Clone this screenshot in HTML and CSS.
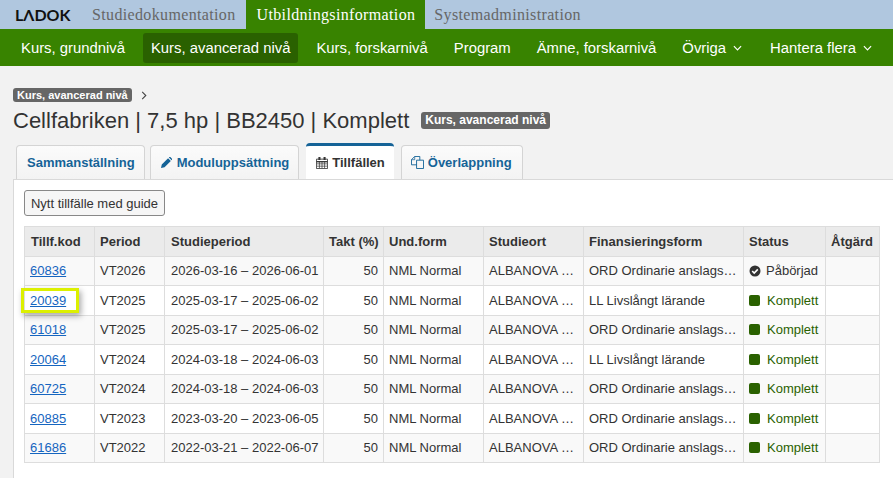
FILE: index.html
```html
<!DOCTYPE html>
<html lang="sv">
<head>
<meta charset="utf-8">
<title>Ladok</title>
<link rel="stylesheet" href="styles.css">
</head>
<body>
<header class="topbar">
  <div class="logo">LΛDOK</div>
  <a class="top-tab">Studiedokumentation</a>
  <a class="top-tab active">Utbildningsinformation</a>
  <a class="top-tab">Systemadministration</a>
</header>
<nav class="mainnav">
  <a class="nav-item">Kurs, grundnivå</a>
  <a class="nav-item active">Kurs, avancerad nivå</a>
  <a class="nav-item">Kurs, forskarnivå</a>
  <a class="nav-item">Program</a>
  <a class="nav-item">Ämne, forskarnivå</a>
  <a class="nav-item">Övriga <svg class="chev" viewBox="0 0 10 6"><path d="M1 1l4 4 4-4" fill="none" stroke="currentColor" stroke-width="1.3"/></svg></a>
  <a class="nav-item">Hantera flera <svg class="chev" viewBox="0 0 10 6"><path d="M1 1l4 4 4-4" fill="none" stroke="currentColor" stroke-width="1.3"/></svg></a>
</nav>
<main class="content">
  <div class="crumbs"><span class="badge">Kurs, avancerad nivå</span><svg class="crumb-sep" viewBox="0 0 6 10"><path d="M1 1l4 4-4 4" fill="none" stroke="#444" stroke-width="1.2"/></svg></div>
  <div class="title-row"><h1>Cellfabriken | 7,5 hp | BB2450 | Komplett</h1><span class="badge big">Kurs, avancerad nivå</span></div>
  <div class="tabs">
    <a class="tab">Sammanställning</a>
    <a class="tab modul"><svg class="ico pencil" viewBox="0 0 14 14"><path d="M0 14l1-4.500 8-8 3.500 3.500-8 8zM10 .5l.5-.5a1 1 0 0 1 1.400 0l2.100 2.100a1 1 0 0 1 0 1.400l-.5.500z" fill="currentColor"/></svg>Moduluppsättning</a>
    <a class="tab active"><svg class="ico cal" viewBox="0 0 14 14"><path d="M.5 2.500h13v11H.5z" fill="none" stroke="currentColor"/><path d="M.5 5.500h13" stroke="currentColor" stroke-width="1.600"/><path d="M1 8h12M1 10.700h12M4 5v8M7 5v8M10 5v8" stroke="currentColor" stroke-width=".8"/><path d="M2.800 0h2.400v3.500H2.800zM8.800 0h2.400v3.500H8.800z" fill="currentColor"/></svg>Tillfällen</a>
    <a class="tab over"><svg class="ico" viewBox="0 0 14 14"><path d="M6 4.500h7.500v9H6z" fill="none" stroke="currentColor" stroke-linejoin="round"/><path d="M6 9.500H.5V4L4 .5h5.500v4" fill="none" stroke="currentColor" stroke-linejoin="round"/><path d="M.5 4H4V.5" fill="none" stroke="currentColor" stroke-width=".8"/></svg>Överlappning</a>
  </div>
  <section class="panel">
    <button class="btn">Nytt tillfälle med guide</button>
    <table class="grid">
      <colgroup>
        <col class="c1"><col class="c2"><col class="c3"><col class="c4"><col class="c5"><col class="c6"><col class="c7"><col class="c8"><col class="c9">
      </colgroup>
      <thead>
        <tr><th>Tillf.kod</th><th>Period</th><th>Studieperiod</th><th>Takt (%)</th><th>Und.form</th><th>Studieort</th><th>Finansieringsform</th><th>Status</th><th>Åtgärd</th></tr>
      </thead>
      <tbody>
        <tr><td><a class="code">60836</a></td><td>VT2026</td><td>2026-03-16 – 2026-06-01</td><td class="num">50</td><td>NML Normal</td><td>ALBANOVA …</td><td>ORD Ordinarie anslags…</td><td><svg class="st" viewBox="0 0 12 12"><circle cx="6" cy="6" r="5.500" fill="#333"/><path d="M3.200 6l2 2 3.600-3.600" fill="none" stroke="#fff" stroke-width="1.600"/></svg>Påbörjad</td><td></td></tr>
        <tr><td><a class="code marked">20039</a></td><td>VT2025</td><td>2025-03-17 – 2025-06-02</td><td class="num">50</td><td>NML Normal</td><td>ALBANOVA …</td><td>LL Livslångt lärande</td><td class="ok"><i class="sq"></i>Komplett</td><td></td></tr>
        <tr><td><a class="code">61018</a></td><td>VT2025</td><td>2025-03-17 – 2025-06-02</td><td class="num">50</td><td>NML Normal</td><td>ALBANOVA …</td><td>ORD Ordinarie anslags…</td><td class="ok"><i class="sq"></i>Komplett</td><td></td></tr>
        <tr><td><a class="code">20064</a></td><td>VT2024</td><td>2024-03-18 – 2024-06-03</td><td class="num">50</td><td>NML Normal</td><td>ALBANOVA …</td><td>LL Livslångt lärande</td><td class="ok"><i class="sq"></i>Komplett</td><td></td></tr>
        <tr><td><a class="code">60725</a></td><td>VT2024</td><td>2024-03-18 – 2024-06-03</td><td class="num">50</td><td>NML Normal</td><td>ALBANOVA …</td><td>ORD Ordinarie anslags…</td><td class="ok"><i class="sq"></i>Komplett</td><td></td></tr>
        <tr><td><a class="code">60885</a></td><td>VT2023</td><td>2023-03-20 – 2023-06-05</td><td class="num">50</td><td>NML Normal</td><td>ALBANOVA …</td><td>ORD Ordinarie anslags…</td><td class="ok"><i class="sq"></i>Komplett</td><td></td></tr>
        <tr><td><a class="code">61686</a></td><td>VT2022</td><td>2022-03-21 – 2022-06-07</td><td class="num">50</td><td>NML Normal</td><td>ALBANOVA …</td><td>ORD Ordinarie anslags…</td><td class="ok"><i class="sq"></i>Komplett</td><td></td></tr>
      </tbody>
    </table>
  </section>
</main>
</body>
</html>
```
FILE: styles.css
```css
* { box-sizing: border-box; }
html, body { margin: 0; height: 478px; overflow: hidden; }
body { background: #f2f2f2; color: #333; font-family: "Liberation Sans", Arial, sans-serif; font-size: 14px; }

.topbar { display: flex; height: 29px; background: #b0c7df; align-items: stretch; }
.logo { width: 81px; padding-left: 15px; font-family: Lato, sans-serif; font-size: 16px; line-height: 29px; color: #111; font-weight: 700; }
.top-tab { padding: 0 10px 0 11px; font-family: "Liberation Serif", serif; font-size: 16px; line-height: 29px; letter-spacing: .35px; color: #666; }
.top-tab:last-child { padding-left: 9px; }
.top-tab.active { background: #388300; color: #fff; }

.mainnav { display: flex; height: 37px; padding: 4px 0 3px 13px; gap: 10px; background: #388300; }
.nav-item { display: flex; align-items: center; gap: 7px; height: 30px; padding: 0 8px; border-radius: 3px; color: #fff; font-size: 14.850px; white-space: nowrap; }
.nav-item.active { background: #2a6100; }
.chev { width: 9px; height: 6px; margin-right: 2px; }

.content { padding: 22px 0 0 13px; }
.crumbs { display: flex; align-items: center; gap: 9px; height: 14px; }
.badge { display: inline-block; background: #666; color: #fff; font-size: 11px; font-weight: 700; line-height: 14px; padding: 0 4px; border-radius: 3px; white-space: nowrap; }
.badge.big { font-size: 12px; line-height: 17px; padding: 0 4px; margin-left: 12px; position: relative; top: -1px; }
.crumb-sep { width: 6px; height: 9px; }
.title-row { display: flex; align-items: center; height: 26px; margin-top: 6px; }
h1 { margin: 0; font-size: 22px; font-weight: 400; color: #333; white-space: nowrap; }

.tabs { display: flex; gap: 5px; margin: 9px 0 0 3px; height: 36px; align-items: flex-end; position: relative; z-index: 1; }
.tab { display: flex; align-items: center; gap: 4px; height: 34px; padding: 0 9px 0 10px; background: linear-gradient(#fbfbfb, #f3f3f3); border: 1px solid #d4d4d4; border-bottom: 0; border-radius: 4px 4px 0 0; color: #156397; font-size: 13px; font-weight: 700; white-space: nowrap; }
.tab.modul { gap: 5px; }
.tab.active { height: 36px; margin: 0 2px; padding: 0 9px 0 10px; gap: 4px; background: #fff; color: #333; border: 0; border-top: 3px solid #156397; }
.tab.over { padding: 0 10px 0 9px; }
.ico { width: 13px; height: 13px; flex: none; }
.ico.pencil { width: 11px; height: 11px; }
.ico.cal { width: 12px; height: 12px; }

.panel { background: #fff; border: 1px solid #d9d9d9; border-right: 0; height: 300px; padding: 10px 0 0 10px; }
.btn { display: block; height: 26px; width: 141px; padding: 0; border: 1px solid #888; border-radius: 3px; background: #f6f6f6; color: #333; font: 13px "Liberation Sans", Arial, sans-serif; }
.grid { table-layout: fixed; width: 855px; margin-top: 10px; border-collapse: collapse; font-size: 13px; }
.c1, .c2 { width: 70px; }
.c3 { width: 159px; }
.c4 { width: 60px; }
.c5, .c6 { width: 100px; }
.c7 { width: 160px; }
.c8 { width: 82px; }
.c9 { width: 54px; }
.grid th, .grid td { border: 1px solid #ddd; padding: 0 5px; white-space: nowrap; overflow: hidden; text-align: left; }
.grid th:first-child, .grid th:nth-child(3), .grid td:nth-child(3) { padding-left: 6px; }
.grid th { height: 29.500px; background: #ebebeb; font-weight: 700; }
.grid td { height: 29.500px; }
.grid tbody tr:nth-child(odd) td { background: #f9f9f9; }
.grid td.num { text-align: right; }
.grid td:has(.marked) { overflow: visible; position: relative; }
.code { color: #1565c0; text-decoration: underline; font-size: 13px; }
.code.marked { display: inline-block; outline: 3px solid #dcf000; padding: 2px 10px 2px 6px; margin-left: -6px; box-shadow: 2px 3px 6px 3px rgba(0,0,0,.35); }
.st { width: 12px; height: 12px; margin-right: 5px; vertical-align: -2px; }
.ok { color: #2a6100; }
.sq { display: inline-block; width: 11px; height: 11px; margin-right: 7px; border-radius: 2px; background: #2a6100; vertical-align: -1px; }
```
